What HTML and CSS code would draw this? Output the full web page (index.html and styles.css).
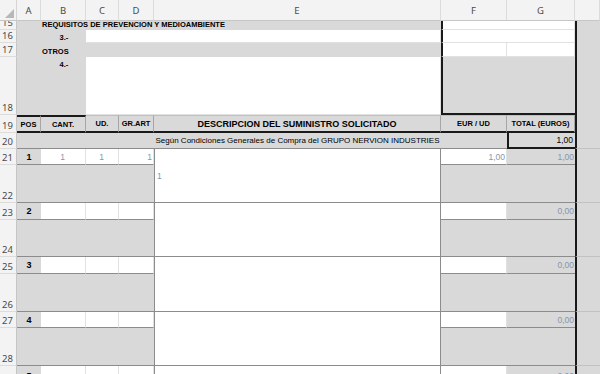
FILE: index.html
```html
<!DOCTYPE html>
<html lang="es">
<head>
    <meta charset="UTF-8">
    <title>Pedido de suministro</title>
    <link rel="stylesheet" href="styles.css">
</head>
<body>
    <div class="sheet">
        <!-- column headers -->
        <div class="corner"><svg width="9" height="9" viewBox="0 0 9 9"><path d="M9 0V9H0Z" fill="#b8b8b8"/></svg></div>
        <div class="hd">A</div>
        <div class="hd">B</div>
        <div class="hd">C</div>
        <div class="hd">D</div>
        <div class="hd">E</div>
        <div class="hd">F</div>
        <div class="hd">G</div>
        <div class="hd"></div>

        <!-- 15 -->
        <div class="rn">15</div>
        <div class="g"></div>
        <div class="g span4 lbl">REQUISITOS DE PREVENCION Y MEDIOAMBIENTE</div>
        <div class="w span2 box-l"></div>
        <div class="h"></div>

        <!-- 16 -->
        <div class="rn">16</div>
        <div class="g"></div>
        <div class="g lbl ctr">3.-</div>
        <div class="w span3"></div>
        <div class="w span2 box-l"></div>
        <div class="h"></div>

        <!-- 17 -->
        <div class="rn">17</div>
        <div class="g"></div>
        <div class="g span4 lbl">OTROS</div>
        <div class="w box-l"></div>
        <div class="w"></div>
        <div class="h"></div>

        <!-- 18 -->
        <div class="rn">18</div>
        <div class="g"></div>
        <div class="g lbl ctr top">4.-</div>
        <div class="w span3"></div>
        <div class="g span2 box-l box-b"></div>
        <div class="h"></div>

        <!-- 19 -->
        <div class="rn">19</div>
        <div class="th th-top">POS</div>
        <div class="th th-top">CANT.</div>
        <div class="th">UD.</div>
        <div class="th">GR.ART</div>
        <div class="th th-big">DESCRIPCION DEL SUMINISTRO SOLICITADO</div>
        <div class="th">EUR / UD</div>
        <div class="th">TOTAL (EUROS)</div>
        <div class="h"></div>

        <!-- 20 -->
        <div class="rn">20</div>
        <div class="g span4 rule"></div>
        <div class="g rule note">Según Condiciones Generales de Compra del GRUPO NERVION INDUSTRIES</div>
        <div class="g rule"></div>
        <div class="g total">1,00</div>
        <div class="h h-rule"></div>

        <!-- 21-22 -->
        <div class="rn">21</div>
        <div class="g pos rule">1</div>
        <div class="w val ctr rule">1</div>
        <div class="w val ctr rule">1</div>
        <div class="w val rule">1</div>
        <div class="w desc rspan2">1</div>
        <div class="w val rule">1,00</div>
        <div class="g val rule">1,00</div>
        <div class="h"></div>

        <div class="rn">22</div>
        <div class="g span4 rule"></div>
        <div class="g span2 rule"></div>
        <div class="h h-rule"></div>

        <!-- 23-24 -->
        <div class="rn">23</div>
        <div class="g pos rule">2</div>
        <div class="w val rule"></div>
        <div class="w val rule"></div>
        <div class="w val rule"></div>
        <div class="w desc rspan2"></div>
        <div class="w val rule"></div>
        <div class="g val rule">0,00</div>
        <div class="h"></div>

        <div class="rn">24</div>
        <div class="g span4 rule"></div>
        <div class="g span2 rule"></div>
        <div class="h h-rule"></div>

        <!-- 25-26 -->
        <div class="rn">25</div>
        <div class="g pos rule">3</div>
        <div class="w val rule"></div>
        <div class="w val rule"></div>
        <div class="w val rule"></div>
        <div class="w desc rspan2"></div>
        <div class="w val rule"></div>
        <div class="g val rule">0,00</div>
        <div class="h"></div>

        <div class="rn">26</div>
        <div class="g span4 rule"></div>
        <div class="g span2 rule"></div>
        <div class="h h-rule"></div>

        <!-- 27-28 -->
        <div class="rn">27</div>
        <div class="g pos rule">4</div>
        <div class="w val rule"></div>
        <div class="w val rule"></div>
        <div class="w val rule"></div>
        <div class="w desc rspan2"></div>
        <div class="w val rule"></div>
        <div class="g val rule">0,00</div>
        <div class="h"></div>

        <div class="rn">28</div>
        <div class="g span4 rule"></div>
        <div class="g span2 rule"></div>
        <div class="h h-rule"></div>

        <!-- 29 -->
        <div class="rn">29</div>
        <div class="g pos rule">5</div>
        <div class="w val rule"></div>
        <div class="w val rule"></div>
        <div class="w val rule"></div>
        <div class="w desc"></div>
        <div class="w val rule"></div>
        <div class="g val rule">0,00</div>
        <div class="h"></div>
    </div>
</body>
</html>
```

FILE: styles.css
```css
html, body {
    margin: 0;
    height: 100%;
    overflow: hidden;
    background: #fff;
}

.sheet {
    display: grid;
    grid-template-columns: 17px 24px 45px 33px 35px 287px 66px 68px 25px;
    grid-template-rows: 21px 9px 13px 14px 58px 18px 16px 16px 38px 17px 37px 17px 38px 16px 38px 20px;
    font-family: "Liberation Sans", Arial, sans-serif;
    color: #000;
}

.sheet > div {
    box-sizing: border-box;
    display: flex;
    align-items: center;
    overflow: hidden;
    white-space: nowrap;
    min-width: 0;
    min-height: 0;
}

/* headers */
.corner {
    background: #f3f3f3;
    justify-content: flex-end;
    align-items: flex-end !important;
    padding: 0 2px 2px 0;
    border-right: 1px solid #d4d4d4;
    border-bottom: 1px solid #c6c6c6;
}

.hd {
    background: #f3f3f3;
    color: #4a4a4a;
    font: 9.5px "Noto Sans", sans-serif;
    justify-content: center;
    align-items: flex-end !important;
    padding-bottom: 3px;
    border-right: 1px solid #dcdcdc;
    border-bottom: 1px solid #c6c6c6;
}

.rn {
    background: #f3f3f3;
    color: #4a4a4a;
    font: 9.5px "Noto Sans", sans-serif;
    line-height: 11px;
    align-items: flex-end !important;
    padding: 0 0 1px 2px;
    border-right: 1px solid #c6c6c6;
    border-bottom: 1px solid #dcdcdc;
}

/* cells */
.g {
    background: #d9d9d9;
}

.w {
    background: #fff;
    border-right: 1px solid #e1e1e1;
    border-bottom: 1px solid #e1e1e1;
}

.h {
    background: #d9d9d9;
    border-left: 2px solid #1a1a1a;
}

.h-rule {
    border-bottom: 1px solid #c2c2c2;
}

.span2 { grid-column: span 2; }
.span3 { grid-column: span 3; }
.span4 { grid-column: span 4; }
.rspan2 { grid-row: span 2; }

.lbl {
    font-size: 7.5px;
    font-weight: bold;
    line-height: 9px;
    align-items: flex-end !important;
    padding: 0 0 1px 1px;
}

.ctr {
    justify-content: center;
}

.lbl.top {
    align-items: flex-start !important;
    padding-top: 3px;
}

.box-l {
    border-left: 2px solid #1a1a1a;
}

.box-b {
    border-bottom: 2px solid #1a1a1a;
}

.th {
    background: #d9d9d9;
    font-size: 7.5px;
    font-weight: bold;
    justify-content: center;
    border-top: 1px solid #c0c0c0;
    border-right: 1px solid #a6a6a6;
    border-bottom: 2px solid #1a1a1a;
}

.th-top {
    border-top: 2px solid #1a1a1a;
}

.th-big {
    font-size: 9px;
}

.rule {
    border-bottom: 1px solid #8c8c8c;
}

.note {
    font-size: 8px;
    justify-content: center;
}

.total {
    font-size: 8.5px;
    justify-content: flex-end;
    padding-right: 2px;
    border-left: 2px solid #1a1a1a;
    border-bottom: 2px solid #1a1a1a;
}

.pos {
    font-size: 9px;
    font-weight: bold;
    justify-content: center;
}

.val {
    font-size: 8.5px;
    color: #8497b0;
    justify-content: flex-end;
    padding-right: 1px;
}

.val.ctr {
    justify-content: center;
}

.desc {
    font-size: 8.5px;
    color: #8497b0;
    padding-left: 2px;
    border-left: 1px solid #8c8c8c;
    border-right: 1px solid #8c8c8c;
    border-bottom: 1px solid #8c8c8c;
}
```
